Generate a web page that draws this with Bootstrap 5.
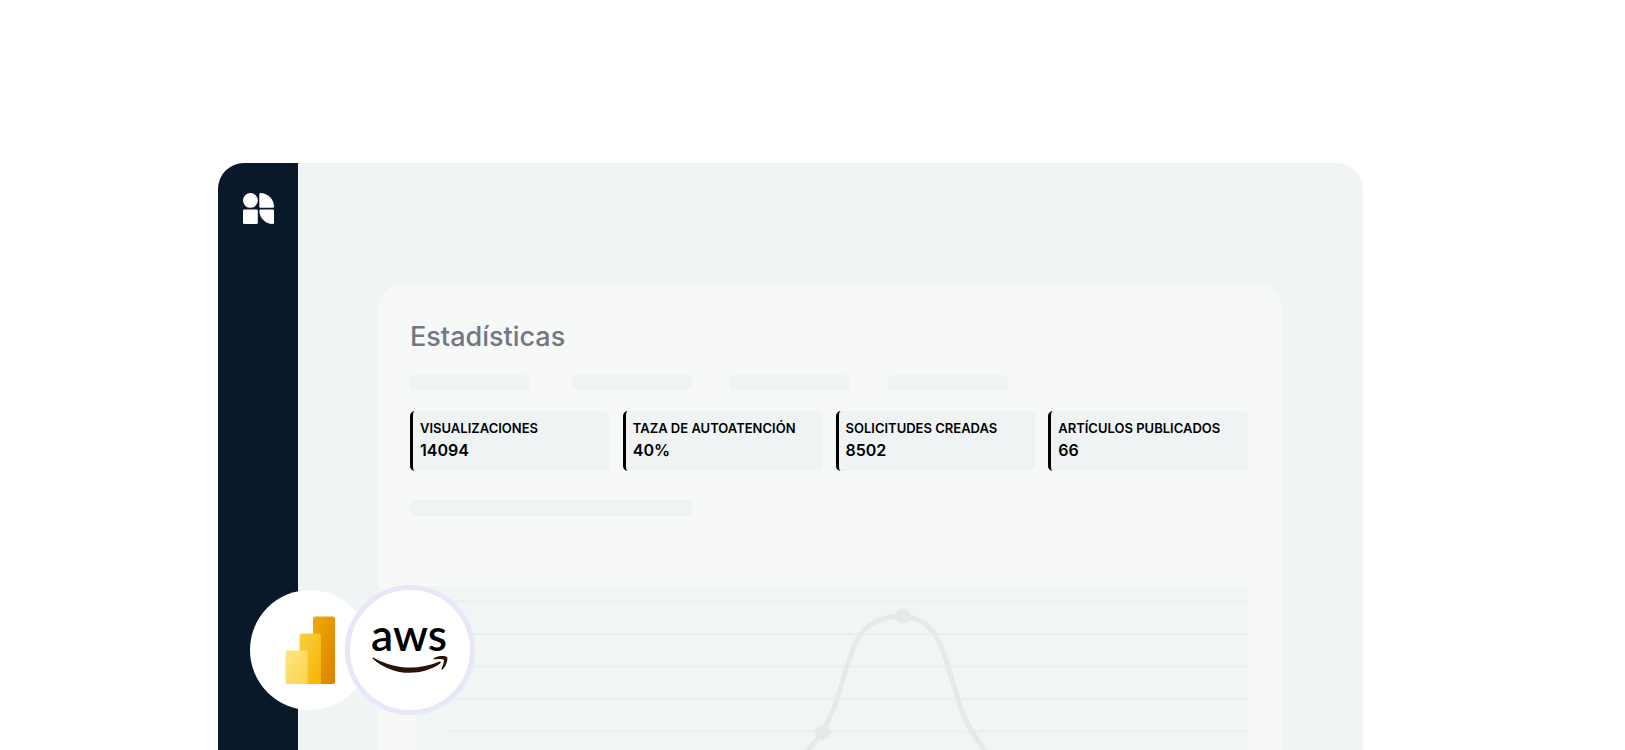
<!DOCTYPE html>
<html lang="es">
<head>
<meta charset="utf-8">
<meta name="viewport" content="width=device-width, initial-scale=1">
<title>Estadísticas</title>
<link rel="stylesheet" href="https://cdn.jsdelivr.net/npm/bootstrap@5.3.0/dist/css/bootstrap.min.css">
<style>
body { font-family: "Inter", "Liberation Sans", sans-serif; background: #fff; color: #000; }
.stage { padding: 163px 262px 0 218px; }
.frame { background: #f0f4f5; border-radius: 26px 26px 0 0; }
.rail { width: 80px; background: #091929; border-top-left-radius: 26px; padding-top: 30px; }
.workspace { padding: 121px 81px 0 81px; min-width: 0; }
.panel { background: #f6f9f8; border-radius: 24px 24px 0 0; padding: 34px 34px 0 31px; }
.panel-title { font-size: 27px; line-height: 38px; font-weight: 500; color: #737783; margin: 0 0 19px; }
.ghost { background: #eff3f4; border-radius: 5px; height: 16px; }
.ghost-tab { width: 120px; }
.ghost-wide { width: 282px; margin: 29px 0 70px; }
.tabs-row { gap: 38px; margin-bottom: 20px; }
.stats { gap: 13px; }
.stat { flex: 1 1 0; height: 60px; background: #eff3f4; border-left: 3px solid #000; border-radius: 5px; padding: 6px 0 0 7px; }
.stat-label { font-size: 13px; line-height: 22px; font-weight: 600; margin: 0; white-space: nowrap; }
.stat-value { font-size: 16px; line-height: 22px; font-weight: 600; margin: 0; }
.chart { background: #f0f6f6; margin-left: 5px; height: 200px; }
.sources { top: 422px; left: 32px; }
.source { width: 120px; height: 120px; background: #fff; }
.source-aws { width: 130px; height: 130px; border: 5px solid #e9e6f9; margin-left: -25px; }
.aws-word { font-family: "Lato", sans-serif; font-size: 44px; font-weight: 600; }
</style>
</head>
<body>
<div class="stage vh-100 d-flex overflow-hidden">
  <div class="frame position-relative d-flex flex-grow-1">
    <aside class="rail d-flex flex-column align-items-center flex-shrink-0">
      <svg width="31" height="31" viewBox="0 0 31 31" fill="#fff" role="img" aria-label="Inicio">
        <circle cx="7.4" cy="7.4" r="7.4"/>
        <path d="M17.5 0C25 .3 30.8 6 31 13.500Q31 14.800 29.700 14.800H17.500Q16.300 14.800 16.300 13.500V1.200Q16.300 0 17.500 0Z"/>
        <rect y="16.600" width="14.800" height="14.400" rx="1.300"/>
        <path d="M17.500 16.600H29.700Q31 16.600 31 17.900V29.700Q31 31 29.700 31C22.500 30.700 16.600 25 16.300 17.900Q16.300 16.600 17.500 16.600Z"/>
      </svg>
    </aside>
    <main class="workspace d-flex flex-grow-1">
      <section class="panel flex-grow-1">
        <h1 class="panel-title">Estadísticas</h1>
        <div class="tabs-row d-flex">
          <div class="ghost ghost-tab me-1"></div>
          <div class="ghost ghost-tab"></div>
          <div class="ghost ghost-tab"></div>
          <div class="ghost ghost-tab"></div>
        </div>
        <div class="stats d-flex">
          <div class="stat"><p class="stat-label">VISUALIZACIONES</p><p class="stat-value">14094</p></div>
          <div class="stat"><p class="stat-label">TAZA DE AUTOATENCIÓN</p><p class="stat-value">40%</p></div>
          <div class="stat"><p class="stat-label">SOLICITUDES CREADAS</p><p class="stat-value">8502</p></div>
          <div class="stat"><p class="stat-label">ARTÍCULOS PUBLICADOS</p><p class="stat-value">66</p></div>
        </div>
        <div class="ghost ghost-wide"></div>
        <div class="chart">
          <svg class="d-block w-100 h-100" viewBox="0 0 833 200" preserveAspectRatio="xMidYMin slice" aria-hidden="true">
            <path d="M34 15.500H833M34 48H833M34 80.500H833M34 113H833M34 145.500H833M34 178H833" stroke="#e8eded" stroke-width="2"/>
            <g fill="none" stroke="#e6e9e8" stroke-width="5">
              <path d="M370 190C382 170 398 162 407.500 146C415 132 418 126 422 113L432 81C436 68 439 57 446 48C456 35 470 30 488 30C502 31 512 38 519 47C526 58 529 67 532 77L543 113Q548 132 558 147Q566 161 592 190"/>
            </g>
            <g fill="#e6e9e8"><circle cx="488" cy="30" r="7.500"/><circle cx="407.500" cy="146.500" r="7.500"/></g>
          </svg>
        </div>
      </section>
    </main>
    <div class="sources position-absolute d-flex align-items-center">
      <div class="source rounded-circle">
        <svg class="d-block" width="120" height="120" viewBox="0 0 120 120" role="img" aria-label="Power BI">
          <defs>
            <linearGradient id="barBack" x1="0" y1="0" x2="1" y2="1"><stop stop-color="#f0aa08"/><stop offset="1" stop-color="#df7f02"/></linearGradient>
            <linearGradient id="barMid" x1="0" y1="0" x2="1" y2="1"><stop stop-color="#f9d240"/><stop offset="1" stop-color="#f7b202"/></linearGradient>
            <linearGradient id="barFront" x1="0" y1="0" x2="1" y2="1"><stop stop-color="#fde684"/><stop offset="1" stop-color="#fdd34a"/></linearGradient>
          </defs>
          <rect x="63" y="26.500" width="22" height="67.500" rx="2.500" fill="url(#barBack)"/>
          <path d="M52 43.500H68.500Q71 43.500 71 46V94H49.500V46Q49.500 43.500 52 43.500Z" fill="url(#barMid)"/>
          <path d="M38 60.500H55Q57.500 60.500 57.500 63V94H38Q35.500 94 35.500 91.500V63Q35.500 60.500 38 60.500Z" fill="url(#barFront)"/>
        </svg>
      </div>
      <div class="source source-aws rounded-circle position-relative">
        <svg class="d-block" width="120" height="120" viewBox="0 0 120 120" role="img" aria-label="AWS">
          <text class="aws-word" x="59" y="61" text-anchor="middle">aws</text>
          <path transform="translate(23.500 20.500) scale(3.120)" fill="#2a1204" d="M21.384 17.014c-2.626 1.94-6.442 2.969-9.722 2.969-4.598 0-8.740-1.700-11.870-4.526-.247-.223-.024-.527.272-.351 3.384 1.963 7.559 3.153 11.877 3.153 2.914 0 6.114-.607 9.060-1.852.439-.200.814.287.383.607zm1.094-1.246c-.336-.430-2.220-.207-3.074-.103-.255.032-.295-.192-.063-.360 1.500-1.053 3.967-.750 4.254-.399.287.360-.080 2.826-1.485 4.007-.216.184-.423.088-.327-.151.320-.790 1.030-2.570.695-2.994z"/>
        </svg>
      </div>
    </div>
  </div>
</div>
<script src="https://cdn.jsdelivr.net/npm/bootstrap@5.3.0/dist/js/bootstrap.bundle.min.js"></script>
</body>
</html>
